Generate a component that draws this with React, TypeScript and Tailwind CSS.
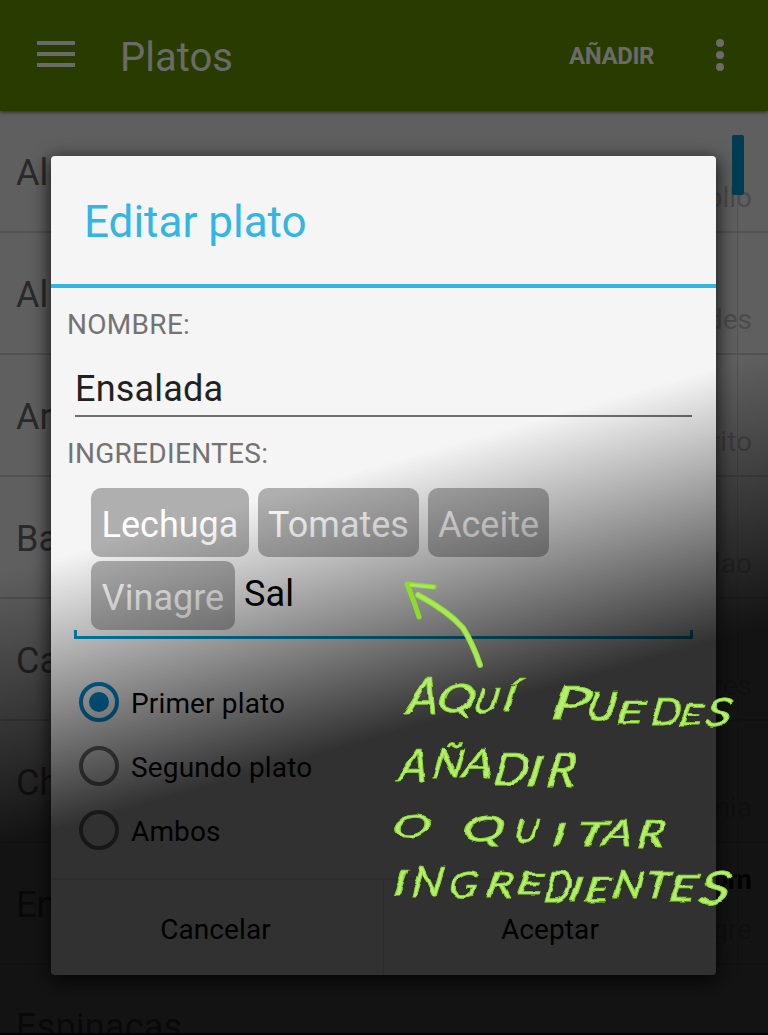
import React from "react";

const rows = [
  { name: "Al", detail: "ollo" },
  { name: "Al", detail: "des" },
  { name: "Ar", detail: "rito" },
  { name: "Ba", detail: "lao" },
  { name: "Ca", detail: "res" },
  { name: "Ch", detail: "nia" },
  { name: "En", detail: "gre", strong: "om" },
];

function Header() {
  return (
    <header className="relative z-10 flex h-[111px] shrink-0 items-center bg-[#293c00] text-[#6a6b68] shadow-[0_1px_4px_rgba(0,0,0,0.6)]">
      <div className="ml-[37px] flex w-[38px] flex-col gap-[7px] pb-[3px]">
        <span className="h-1 bg-current" />
        <span className="h-1 bg-current" />
        <span className="h-1 bg-current" />
      </div>
      <h1 className="ml-[45px] pt-1 text-[40px]">Platos</h1>
      <span className="ml-auto text-[24px] font-bold tracking-[-0.4px]">AÑADIR</span>
      <div className="mr-11 ml-[62px] flex flex-col gap-1 pb-px">
        <span className="size-2 rounded-full bg-current" />
        <span className="size-2 rounded-full bg-current" />
        <span className="size-2 rounded-full bg-current" />
      </div>
    </header>
  );
}

function DishList() {
  return (
    <ul className="flex flex-col">
      {rows.map((row, i) => (
        <li key={i} className="relative flex h-[122px] shrink-0 justify-between border-b-2 border-[#525252] px-4">
          <span className="h-[120px] pt-px text-[36px] leading-[122px] text-[#2a2a2a]">{row.name}</span>
          <span className="pt-[71px] text-[28px] leading-8 text-[#4b4b4b]">{row.detail}</span>
          {row.strong && (
            <strong className="absolute top-[21px] right-4 text-[28px] leading-8 text-[#090d00]">{row.strong}</strong>
          )}
        </li>
      ))}
      <li className="h-[68px] shrink-0 overflow-hidden px-4 pt-px text-[36px] leading-[122px] tracking-[0.2px] text-[#2a2a2a]">Espinacas</li>
      <li className="h-[2px] bg-black" />
    </ul>
  );
}

function Chip({ label, width }: { label: string; width: string }) {
  return (
    <span className={`flex h-[69px] items-center justify-center rounded-[10px] bg-[#afafaf] pt-1 text-[36px] text-white ${width}`}>
      {label}
    </span>
  );
}

function Radio({ label, checked }: { label: string; checked?: boolean }) {
  return (
    <label className="flex h-16 items-center">
      <span className={`flex size-10 items-center justify-center rounded-full border-4 ${checked ? "border-[#0088cc]" : "border-[#737373]"}`}>
        {checked && <span className="size-5 rounded-full bg-[#0088cc]" />}
      </span>
      <span className="ml-3 pt-[3px] text-[28px] tracking-[0.15px]">{label}</span>
    </label>
  );
}

function Dialog() {
  return (
    <section className="absolute top-[156px] left-[51px] flex h-[819px] w-[665px] flex-col overflow-hidden rounded-[4px] bg-[#f5f5f5] text-black">
      <h2 className="flex h-[132px] shrink-0 items-center border-b-4 border-[#33b5e5] pt-1 pl-[33px] text-[44px] text-[#33b5e5]">
        Editar plato
      </h2>
      <div className="flex h-[73px] shrink-0 items-center pl-4 text-[28px] tracking-[0.3px] text-[#737373]">NOMBRE:</div>
      <div className="mr-6 ml-6 flex h-[56px] shrink-0 items-center border-b-2 border-[#6f706e] pt-px text-[36px] tracking-[0.2px] text-[#212121]">
        Ensalada
      </div>
      <div className="flex h-[71px] shrink-0 items-center pt-[2px] pl-4 text-[28px] tracking-[0.3px] text-[#737373]">INGREDIENTES:</div>
      <div className="flex shrink-0 flex-col gap-1 pl-10">
        <div className="flex gap-[9px]">
          <Chip label="Lechuga" width="w-[158px]" />
          <Chip label="Tomates" width="w-[161px]" />
          <Chip label="Aceite" width="w-[121px]" />
        </div>
        <div className="flex items-center gap-[9px]">
          <Chip label="Vinagre" width="w-[144px]" />
          <span className="pb-1 text-[36px] tracking-[0.2px]">Sal</span>
        </div>
      </div>
      <div className="mr-[23px] ml-[23px] h-[9px] shrink-0 border-x-[3px] border-b-[3px] border-[#0099cc]" />
      <div className="mt-[31px] flex shrink-0 flex-col pl-7">
        <Radio label="Primer plato" checked />
        <Radio label="Segundo plato" />
        <Radio label="Ambos" />
      </div>
      <div className="mt-auto flex h-[97px] shrink-0 border-t-2 border-[#dcdcdc] text-[28px] tracking-[0.1px]">
        <button className="w-[333px] border-r border-[#dcdcdc] pt-[5px] pr-[3px]">Cancelar</button>
        <button className="flex-1 pt-[5px]">Aceptar</button>
      </div>
    </section>
  );
}

// [character, left, baseline, advance, cap height]
type Glyph = [string, number, number, number, number];
const note: Glyph[][] = [
  [
    ["A", 405, 714, 32, 36], ["Q", 436, 712, 37, 28], ["U", 473, 713, 24, 25], ["Í", 501, 710, 13, 24],
    ["P", 551, 720, 38, 34], ["U", 586, 720, 30, 28], ["E", 617, 723, 27, 22], ["D", 651, 725, 30, 27], ["E", 680, 725, 23, 21], ["S", 706, 726, 26, 28],
  ],
  [
    ["A", 397, 781, 29, 32], ["Ñ", 430, 777, 31, 28], ["A", 461, 777, 30, 28], ["D", 493, 785, 34, 32], ["I", 527, 785, 14, 28], ["R", 546, 786, 29, 34],
  ],
  [
    ["O", 391, 837, 39, 22], ["Q", 462, 841, 42, 25], ["U", 514, 842, 24, 23], ["I", 554, 846, 12, 23], ["T", 575, 846, 33, 25], ["A", 604, 846, 28, 27], ["R", 638, 847, 26, 27],
  ],
  [
    ["I", 391, 895, 15, 25], ["N", 410, 896, 32, 30], ["G", 448, 897, 28, 25], ["R", 485, 897, 27, 26], ["E", 515, 895, 27, 22], ["D", 544, 902, 27, 31],
    ["I", 569, 901, 13, 24], ["E", 583, 901, 27, 23], ["N", 612, 898, 30, 27], ["T", 645, 898, 23, 27], ["E", 668, 901, 28, 27], ["S", 699, 904, 31, 32],
  ],
];

function HandNote() {
  return (
    <svg className="pointer-events-none absolute inset-0" width="768" height="1035" viewBox="0 0 768 1035">
      <defs>
        <filter id="marker" x="0" y="0" width="768" height="1035" filterUnits="userSpaceOnUse">
          <feTurbulence type="fractalNoise" baseFrequency="0.06" numOctaves="2" seed="4" result="noise" />
          <feDisplacementMap in="SourceGraphic" in2="noise" scale="5" xChannelSelector="R" yChannelSelector="G" />
        </filter>
      </defs>
      <g fill="none" strokeLinecap="round" strokeLinejoin="round">
        <path d="M480 665 Q473 644 463 628 Q448 611 418 595" stroke="#8edb2b" strokeWidth="6" />
        <path d="M480 665 Q473 644 463 628 Q448 611 418 595" stroke="#a9e85e" strokeWidth="4" />
        <path d="M434 587 L407 584 L414 602 L419 617" stroke="#8edb2b" strokeWidth="5" />
        <path d="M433 587 L411 585" stroke="#a9e85e" strokeWidth="3" />
      </g>
      <g filter="url(#marker)" stroke="#8edb2b" fill="#b5ed72">
        {note.map((line, i) => (
          <text key={i} transform={`translate(0 ${line[0][2]}) skewX(-9)`} className="font-['Lato'] italic" strokeWidth="0.9">
            {line.map(([ch, x, y, advance, cap], j) => (
              <tspan key={j} x={x} y={y - line[0][2]} fontSize={cap / 0.72} textLength={advance} lengthAdjust="spacingAndGlyphs">
                {ch}
              </tspan>
            ))}
          </text>
        ))}
      </g>
    </svg>
  );
}

export default function App() {
  return (
    <main className="relative flex h-[1035px] w-[768px] flex-col overflow-hidden bg-[#5f5f5f] font-['Roboto',sans-serif] leading-none">
      <Header />
      <DishList />
      <div className="absolute top-[195px] left-[737px] h-[780px] w-px bg-[#545454]" />
      <div className="absolute top-[135px] left-[732px] h-[60px] w-3 rounded-[2px] bg-[#003d52]" />
      <div className="absolute top-[156px] left-[51px] h-[819px] w-[665px] rounded-[4px] shadow-[0_5px_18px_2px_rgba(0,0,0,0.75)]" />
      <Dialog />
      <div className="pointer-events-none absolute inset-0 bg-[linear-gradient(164deg,transparent_551px,rgba(0,0,0,0.8)_813px)]" />
      <HandNote />
    </main>
  );
}
